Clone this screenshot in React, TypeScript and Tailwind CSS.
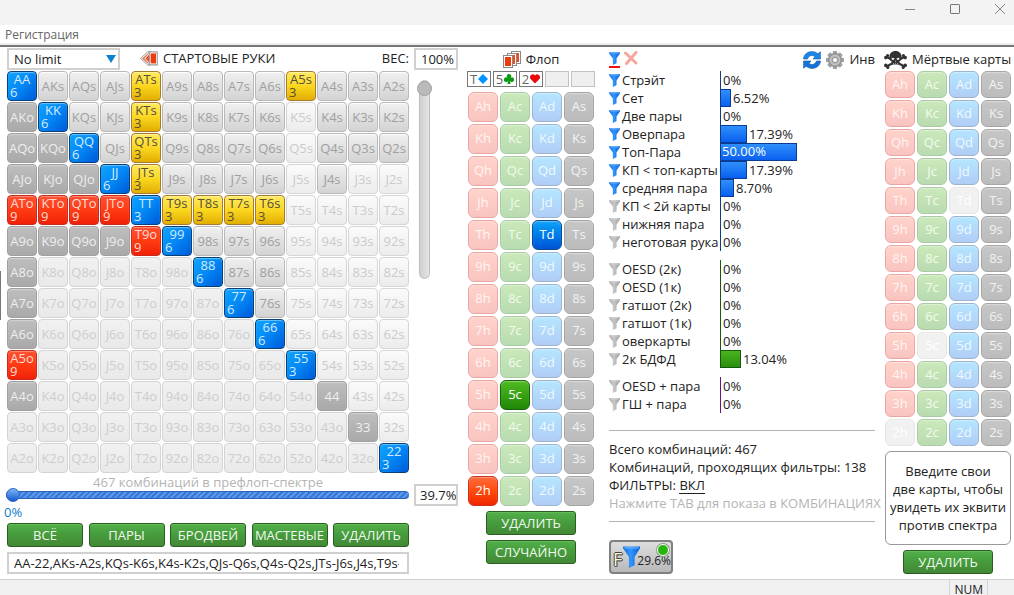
import React, { useState } from "react";

const RANKS = ["A", "K", "Q", "J", "T", "9", "8", "7", "6", "5", "4", "3", "2"];
const SUITS = ["h", "c", "d", "s"];

const SELECTED: Record<string, number> = {
  AA: 6, KK: 6, QQ: 6, JJ: 6, TT: 3, "99": 6, "88": 6, "77": 6, "66": 6, "55": 3, "22": 3,
  ATs: 3, KTs: 3, QTs: 3, JTs: 3, T9s: 3, T8s: 3, T7s: 3, T6s: 3, A5s: 3,
  ATo: 9, KTo: 9, QTo: 9, JTo: 9, T9o: 9, A5o: 9,
};

const IN_RANGE = new Set(
  (
    "AKs AQs AJs A9s A8s A7s A6s A4s A3s A2s KQs KJs K9s K8s K7s K6s K4s K3s K2s " +
    "QJs Q9s Q8s Q7s Q6s Q4s Q3s Q2s J9s J8s J7s J6s J4s 98s 97s 96s 87s 86s 76s " +
    "AKo AQo AJo A9o A8o A7o A6o A4o KQo KJo K9o QJo Q9o J9o 44 33"
  ).split(" ")
);

function handName(row: number, col: number) {
  if (row === col) return RANKS[row] + RANKS[col];
  return row < col ? RANKS[row] + RANKS[col] + "s" : RANKS[col] + RANKS[row] + "o";
}

function handStyle(name: string) {
  const kind = name.length === 2 ? "p" : name[2];
  if (name in SELECTED) {
    if (kind === "p") return "border-[#0a4078] bg-linear-to-br from-[#11a4ff] via-[#0487f5] to-[#0058d8] text-[#d5eaff] shadow-[inset_0_1px_1px_#69c4ff]";
    if (kind === "s") return "border-[#a87a30] bg-linear-to-b from-[#ffe95c] via-[#fbd71d] to-[#e2ae00] text-[#55503a] shadow-[inset_0_1px_1px_#fff3a0]";
    return "border-[#c92a1c] bg-linear-to-b from-[#ff5030] via-[#ff3a12] to-[#f02008] text-[#ffdcd2] shadow-[inset_0_1px_1px_#ff9078]";
  }
  if (IN_RANGE.has(name)) {
    if (kind === "s") return "border-[#b8b8b8] bg-linear-to-b from-[#f0f0f0] to-[#d3d3d3] text-[#a0a0a0] shadow-[inset_0_1px_1px_#ffffff]";
    return "border-[#a0a0a0] bg-linear-to-b from-[#bebebe] to-[#a9a9a9] text-[#eeeeee] shadow-[inset_0_1px_1px_#d2d2d2]";
  }
  if (kind === "s") return "border-[#d6d6d6] bg-linear-to-b from-[#fbfbfb] to-[#ececec] text-[#cbcbcb]";
  return "border-[#d4d4d4] bg-linear-to-b from-[#f1f1f1] to-[#e9e9e9] text-[#cdcdcd]";
}

const CARD_STYLE: Record<string, string> = {
  h: "border-[#eba6a4] bg-linear-to-b from-[#ffd3ca] to-[#f9c4c0] text-[#fff5f3]",
  c: "border-[#a9cba4] bg-linear-to-b from-[#cbe9ba] to-[#b9dbb0] text-[#f3fbef]",
  d: "border-[#9db4cf] bg-linear-to-b from-[#b4e6ff] to-[#b0cdf6] text-[#f0f9ff]",
  s: "border-[#a5a5a5] bg-linear-to-b from-[#c6c6c6] to-[#bcbcbc] text-[#f3f3f3]",
};

const CARD_ACTIVE: Record<string, string> = {
  h: "border-[#d3301e] bg-linear-to-b from-[#ff6a35] via-[#ff4a0c] to-[#f02400] text-white",
  c: "border-[#17600c] bg-linear-to-b from-[#4fbb20] to-[#1f8806] text-white",
  d: "border-[#0b4b90] bg-linear-to-b from-[#14a2fb] to-[#0052d6] text-white",
  s: "border-[#333333] bg-linear-to-b from-[#666666] to-[#333333] text-white",
};

function CardGrid({ label, active, disabled, compact }: { label: string; active: string[]; disabled: string[]; compact?: boolean }) {
  return (
    <div role="group" aria-label={label} className="grid grid-cols-[repeat(4,30px)] gap-0.5">
      {RANKS.map((rank) =>
        SUITS.map((suit) => {
          const card = rank + suit;
          const look = active.includes(card)
            ? CARD_ACTIVE[suit]
            : disabled.includes(card)
              ? "border-[#e6e6e6] bg-[#f1f1f1] text-white"
              : CARD_STYLE[suit];
          return (
            <button
              key={card}
              type="button"
              className={`flex items-center justify-center rounded-md border shadow-[inset_0_1px_1px_rgba(255,255,255,0.35)] ${compact ? "h-[27px]" : "h-[30px]"} ${look}`}
            >
              {card}
            </button>
          );
        })
      )}
    </div>
  );
}

function GreenButton({ children, wide }: { children: React.ReactNode; wide?: boolean }) {
  return (
    <button
      type="button"
      className={`flex h-6 items-center justify-center rounded-[3px] border border-[#2b5f22] bg-linear-to-b from-[#52b04a] via-[#469b3c] to-[#438836] pt-0.5 whitespace-nowrap text-[#f1faee] shadow-[inset_0_1px_0_#62bb58] ${wide ? "w-[90px]" : "w-[76px]"}`}
    >
      {children}
    </button>
  );
}

function Funnel({ on, className }: { on: boolean; className: string }) {
  const id = on ? "funnel-on" : "funnel-off";
  return (
    <svg viewBox="0 0 12 14" preserveAspectRatio="none" className={className} aria-hidden="true">
      <defs>
        <linearGradient id={id} x1="0" y1="0" x2="1" y2="0">
          <stop offset="0" stopColor={on ? "#1a6ce0" : "#a6a6a6"} />
          <stop offset="0.45" stopColor={on ? "#2f96ff" : "#c8c8c8"} />
          <stop offset="1" stopColor={on ? "#0b5cd2" : "#999999"} />
        </linearGradient>
      </defs>
      <path d="M0 0.3H12V1.4L8.2 7V12.2L4.2 14V7L0 1.4Z" fill={`url(#${id})`} />
      <path d="M1 1.2H11" stroke={on ? "#6ab4ff" : "#d4d4d4"} strokeWidth="0.8" />
    </svg>
  );
}

type Row = { name: string; pct: number; on?: boolean };

const GROUPS: { tone: "blue" | "green" | "purple"; rows: Row[] }[] = [
  {
    tone: "blue",
    rows: [
      { name: "Стрэйт", pct: 0, on: true },
      { name: "Сет", pct: 6.52, on: true },
      { name: "Две пары", pct: 0, on: true },
      { name: "Оверпара", pct: 17.39, on: true },
      { name: "Топ-Пара", pct: 50, on: true },
      { name: "КП < топ-карты", pct: 17.39, on: true },
      { name: "средняя пара", pct: 8.7, on: true },
      { name: "КП < 2й карты", pct: 0 },
      { name: "нижняя пара", pct: 0 },
      { name: "неготовая рука", pct: 0 },
    ],
  },
  {
    tone: "green",
    rows: [
      { name: "OESD (2к)", pct: 0 },
      { name: "OESD (1к)", pct: 0 },
      { name: "гатшот (2к)", pct: 0 },
      { name: "гатшот (1к)", pct: 0 },
      { name: "оверкарты", pct: 0 },
      { name: "2к БДФД", pct: 13.04 },
    ],
  },
  {
    tone: "purple",
    rows: [
      { name: "OESD + пара", pct: 0 },
      { name: "ГШ + пара", pct: 0 },
    ],
  },
];

const AXIS = { blue: "border-[#0c3c8c]", green: "border-[#155a10]", purple: "border-[#6a1480]" };
const BAR = {
  blue: "border-[#0b3c94] bg-linear-to-b from-[#2f8ffb] to-[#0a5ff0]",
  green: "border-[#145a0c] bg-linear-to-b from-[#4ab41e] to-[#2b8e10]",
  purple: "border-[#6a1480] bg-[#9030b0]",
};

function FilterRow({ row, tone }: { row: Row; tone: "blue" | "green" | "purple" }) {
  const text = row.pct === 0 ? "0%" : row.pct.toFixed(2) + "%";
  const inside = row.pct >= 40;
  return (
    <li className="flex h-[18px] items-stretch">
      <button type="button" aria-pressed={!!row.on} className="flex w-[111px] items-center gap-0.5 pt-px text-left whitespace-nowrap">
        <Funnel on={!!row.on} className="h-[13px] w-[11px] shrink-0" />
        {row.name}
      </button>
      <div className={`flex items-center border-l ${AXIS[tone]}`}>
        {row.pct > 0 && (
          <div className={`flex h-full items-center border border-l-0 text-white ${BAR[tone]}`} style={{ width: Math.round(row.pct * 1.52) }}>
            {inside && <span className="pl-px">{text}</span>}
          </div>
        )}
        {!inside && <span className="pt-px pl-0.5">{text}</span>}
      </div>
    </li>
  );
}

const FIELD = "h-[22px] border-2 border-[#d0d0d0] bg-white outline-none";

const SUIT_PATHS: Record<string, { color: string; d: string }> = {
  d: { color: "#0094ff", d: "M5 0L10 5L5 10L0 5Z" },
  c: { color: "#0b9a12", d: "M5 0A2.3 2.3 0 0 1 6.8 3.7A2.3 2.3 0 1 1 5.8 6.8L6.6 10H3.4L4.2 6.8A2.3 2.3 0 1 1 3.2 3.7A2.3 2.3 0 0 1 5 0Z" },
  h: { color: "#ea0a0a", d: "M5 9.6L0.6 5A2.7 2.7 0 0 1 5 1.6A2.7 2.7 0 0 1 9.4 5Z" },
};

function BoardSlot({ rank, suit }: { rank?: string; suit?: string }) {
  if (!rank || !suit) return <div className="h-4 w-6 border border-[#c2c2c2] bg-[#efefef]" />;
  return (
    <div className="flex h-4 w-6 items-center justify-center gap-px border border-[#777777] bg-white leading-none text-[#666666]">
      {rank}
      <svg viewBox="0 0 10 10" className="size-2.5" aria-hidden="true">
        <path d={SUIT_PATHS[suit].d} fill={SUIT_PATHS[suit].color} />
      </svg>
    </div>
  );
}

function TitleBar() {
  return (
    <header className="flex h-[25px] items-start justify-end gap-[35px] bg-[#f3f3f3] pt-1 pr-[9px]">
      <button type="button" aria-label="Свернуть">
        <svg viewBox="0 0 10 10" className="size-2.5"><path d="M0 5.5H10" stroke="#888" fill="none" /></svg>
      </button>
      <button type="button" aria-label="Развернуть">
        <svg viewBox="0 0 10 10" className="size-2.5"><rect x="0.5" y="0.5" width="9" height="9" rx="0.6" stroke="#777" fill="none" /></svg>
      </button>
      <button type="button" aria-label="Закрыть">
        <svg viewBox="0 0 10 10" className="size-2.5"><path d="M0 0L10 10M10 0L0 10" stroke="#888" fill="none" /></svg>
      </button>
    </header>
  );
}

function HandsIcon() {
  return (
    <svg viewBox="0 0 18 16" className="h-4 w-[18px]" aria-hidden="true">
      <path d="M0.6 7.4L7.6 0.9H10V14H7.6Z" fill="#fff" stroke="#9a9a9a" />
      <path d="M2.2 7.4L8 2.2V12.8Z" fill="#f5582e" />
      <path d="M4.2 7.4L10 1.2V13.8Z" fill="#fff" stroke="#aaa" strokeWidth="0.5" />
      <path d="M5.4 7.4L9.6 3.2V11.8Z" fill="#f0461e" />
      <rect x="9.2" y="0.9" width="8" height="13" fill="#fff" stroke="#888" />
      <rect x="10.6" y="2.4" width="5.4" height="10" fill="#f03a10" />
    </svg>
  );
}

function FlopIcon() {
  return (
    <svg viewBox="0 0 18 17" className="h-[17px] w-[18px]" aria-hidden="true">
      <rect x="8.5" y="0.5" width="9" height="12" fill="#fff" stroke="#8a8a8a" />
      <rect x="10" y="2" width="6" height="9" fill="#f04a18" />
      <rect x="4.5" y="2.5" width="9" height="12" fill="#fff" stroke="#8a8a8a" />
      <rect x="6" y="4" width="6" height="9" fill="#f04a18" />
      <rect x="0.5" y="4.5" width="9" height="12" fill="#fff" stroke="#8a8a8a" />
      <rect x="2" y="6" width="6" height="9" fill="#ee3a0c" />
    </svg>
  );
}

function RefreshIcon() {
  return (
    <svg viewBox="0 0 18 18" className="size-[18px]" aria-hidden="true">
      <path d="M0.5 8C0.8 3.6 4.4 0.6 8.8 0.6C11.2 0.6 13.2 1.4 14.8 2.8L17.4 0.8V8H10L12 5.8C9.8 3.6 5.6 4.2 4.6 8Z" fill="#1a86e6" stroke="#1559a8" strokeWidth="0.6" />
      <path d="M17.5 10C17.2 14.4 13.6 17.4 9.2 17.4C6.8 17.4 4.8 16.6 3.2 15.2L0.6 17.2V10H8L6 12.2C8.2 14.4 12.4 13.8 13.4 10Z" fill="#1672d6" stroke="#1559a8" strokeWidth="0.6" />
    </svg>
  );
}

function GearIcon() {
  return (
    <svg viewBox="0 0 18 18" className="size-[18px]" aria-hidden="true">
      <g fill="#a8a8a8" stroke="#777777" strokeWidth="0.6">
        {[0, 45, 90, 135, 180, 225, 270, 315].map((angle) => (
          <path key={angle} d="M6.9 4L7.4 0.4H10.6L11.1 4Z" transform={`rotate(${angle} 9 9)`} />
        ))}
        <circle cx="9" cy="9" r="6.4" />
      </g>
      <circle cx="9" cy="9" r="4.6" fill="#b4b4b4" stroke="#c4c4c4" strokeWidth="1.2" />
      <circle cx="9" cy="9" r="2.5" fill="#fff" stroke="#808080" strokeWidth="0.8" />
    </svg>
  );
}

function SkullIcon() {
  return (
    <svg viewBox="0 0 23 18" className="h-[18px] w-[23px] shrink-0" aria-hidden="true">
      <g stroke="#333333" strokeWidth="2.2" strokeLinecap="round">
        <path d="M2.8 6L20 15.2M20.2 6L3 15.2" />
      </g>
      <g fill="#333333">
        <circle cx="1.8" cy="6.6" r="1.8" /><circle cx="3.6" cy="4.6" r="1.6" />
        <circle cx="21.2" cy="6.6" r="1.8" /><circle cx="19.4" cy="4.6" r="1.6" />
        <circle cx="1.8" cy="14.4" r="1.8" /><circle cx="3.8" cy="16.4" r="1.6" />
        <circle cx="21.2" cy="14.4" r="1.8" /><circle cx="19.2" cy="16.4" r="1.6" />
        <path d="M11.5 0C7.8 0 5.4 2.6 5.4 6C5.4 8 6.2 9.6 7.6 10.4V13.6H15.4V10.4C16.8 9.6 17.6 8 17.6 6C17.6 2.6 15.2 0 11.5 0Z" />
      </g>
      <path d="M7.6 6.8L10.4 7.2L10 8.8H8ZM15.4 6.8L12.6 7.2L13 8.8H15Z" fill="#fff" />
      <path d="M11.5 9.4L12.1 10.6H10.9Z" fill="#fff" />
      <path d="M9.5 12V13.4M11.5 12V13.4M13.5 12V13.4" stroke="#ddd" strokeWidth="0.6" />
    </svg>
  );
}

function StartingHands() {
  const [range, setRange] = useState("AA-22,AKs-A2s,KQs-K6s,K4s-K2s,QJs-Q6s,Q4s-Q2s,JTs-J6s,J4s,T9s-T6s,98s-96s,87s-86s,76s");
  return (
    <section className="flex w-[402px] shrink-0 flex-col">
      <div className="flex h-[22px] items-center">
        <div className="grid w-[113px] items-center">
          <select aria-label="Тип игры" className={`${FIELD} col-start-1 row-start-1 w-full appearance-none pl-[5px]`}>
            <option>No limit</option>
          </select>
          <svg viewBox="0 0 10 8" className="pointer-events-none col-start-1 row-start-1 mr-1 h-2 w-2.5 justify-self-end" aria-hidden="true">
            <path d="M0 0H10L5 8Z" fill="#0a84d0" />
          </svg>
        </div>
        <h2 className="ml-5 flex items-center gap-[5px]">
          <HandsIcon />
          СТАРТОВЫЕ РУКИ
        </h2>
        <label htmlFor="weight" className="ml-auto">ВЕС:</label>
      </div>

      <div role="group" aria-label="Стартовые руки" className="mt-px grid grid-cols-[repeat(13,30px)] gap-px">
        {RANKS.map((_, row) =>
          RANKS.map((__, col) => {
            const name = handName(row, col);
            const count = SELECTED[name];
            return (
              <button
                key={name}
                type="button"
                className={`flex h-[30px] flex-col justify-center rounded-sm border leading-[13px] ${handStyle(name)}`}
              >
                <span className="flex justify-center self-stretch">{name}</span>
                {count !== undefined && <span className="self-start pl-0.5">{count}</span>}
              </button>
            );
          })
        )}
      </div>

      <p className="h-[15px] text-center leading-[18px] text-[#b4b4b4]">467 комбинаций в префлоп-спектре</p>
      <input
        type="range"
        aria-label="Размер спектра"
        defaultValue={0}
        className="-ml-px h-3.5 w-[403px] appearance-none bg-transparent [&::-webkit-slider-runnable-track]:h-2 [&::-webkit-slider-runnable-track]:rounded-sm [&::-webkit-slider-runnable-track]:border-y [&::-webkit-slider-runnable-track]:border-[#2a62b8] [&::-webkit-slider-runnable-track]:bg-[repeating-linear-gradient(135deg,#5c98e8_0px,#5c98e8_2px,#3878d8_2px,#3878d8_4px)] [&::-webkit-slider-thumb]:-mt-1 [&::-webkit-slider-thumb]:size-3.5 [&::-webkit-slider-thumb]:appearance-none [&::-webkit-slider-thumb]:rounded-full [&::-webkit-slider-thumb]:border [&::-webkit-slider-thumb]:border-[#2a66c8] [&::-webkit-slider-thumb]:bg-linear-to-b [&::-webkit-slider-thumb]:from-[#78b4f4] [&::-webkit-slider-thumb]:to-[#1a58d0]"
      />
      <p className="-ml-[3px] h-[21px] leading-5 text-[#0a7ec8]">0%</p>
      <div className="flex justify-between">
        <GreenButton>ВСЁ</GreenButton>
        <GreenButton>ПАРЫ</GreenButton>
        <GreenButton>БРОДВЕЙ</GreenButton>
        <GreenButton>МАСТЕВЫЕ</GreenButton>
        <GreenButton>УДАЛИТЬ</GreenButton>
      </div>
      <input
        type="text"
        aria-label="Спектр"
        value={range}
        onChange={(e) => setRange(e.target.value)}
        className={`${FIELD} mt-[5px] w-full pr-2 pl-[5px]`}
      />
    </section>
  );
}

function WeightColumn() {
  return (
    <div className="flex w-11 shrink-0 flex-col">
      <input id="weight" type="text" defaultValue="100%" className={`${FIELD} w-full pl-[5px]`} />
      <input
        type="range"
        aria-label="Вес"
        defaultValue={100}
        className="mt-2.5 ml-[3px] h-[199px] w-[15px] appearance-none bg-transparent [direction:rtl] [writing-mode:vertical-lr] [&::-webkit-slider-runnable-track]:w-[11px] [&::-webkit-slider-runnable-track]:rounded-md [&::-webkit-slider-runnable-track]:border [&::-webkit-slider-runnable-track]:border-[#bdbdbd] [&::-webkit-slider-runnable-track]:bg-linear-to-r [&::-webkit-slider-runnable-track]:from-[#cfcfcf] [&::-webkit-slider-runnable-track]:to-[#e6e6e6] [&::-webkit-slider-thumb]:-ml-[3px] [&::-webkit-slider-thumb]:size-[15px] [&::-webkit-slider-thumb]:appearance-none [&::-webkit-slider-thumb]:rounded-full [&::-webkit-slider-thumb]:border [&::-webkit-slider-thumb]:border-[#a0a0a0] [&::-webkit-slider-thumb]:bg-[#bababa]"
      />
      <input type="text" aria-label="Процент спектра" defaultValue="39.7%" className={`${FIELD} mt-auto mb-[69px] w-full pl-1`} />
    </div>
  );
}

function Flop() {
  return (
    <section className="flex w-32 shrink-0 flex-col items-center">
      <h2 className="flex h-[23px] items-center gap-[5px]">
        <FlopIcon />
        Флоп
      </h2>
      <div className="flex gap-0.5">
        <BoardSlot rank="T" suit="d" />
        <BoardSlot rank="5" suit="c" />
        <BoardSlot rank="2" suit="h" />
        <BoardSlot />
        <BoardSlot />
      </div>
      <div className="my-[5px]">
        <CardGrid label="Флоп" active={["Td", "5c", "2h"]} disabled={[]} />
      </div>
      <div className="flex flex-col gap-[5px]">
        <GreenButton wide>УДАЛИТЬ</GreenButton>
        <GreenButton wide>СЛУЧАЙНО</GreenButton>
      </div>
    </section>
  );
}

function Filters() {
  return (
    <section className="flex min-w-0 flex-1 flex-col">
      <div className="flex h-[23px] items-center">
        <button type="button" aria-label="Фильтры" className="border-b-2 border-[#f01010] pb-px">
          <Funnel on className="h-[13px] w-[11px]" />
        </button>
        <button type="button" aria-label="Сбросить фильтры" className="mb-1 ml-1">
          <svg viewBox="0 0 14 14" className="size-3.5">
            <path d="M1.5 2L12 12M12 1.5L2.5 12.5" stroke="#f8a59b" strokeWidth="3" strokeLinecap="round" />
          </svg>
        </button>
        <div className="ml-auto flex items-center gap-[5px]">
          <button type="button" aria-label="Обновить"><RefreshIcon /></button>
          <button type="button" aria-label="Настройки"><GearIcon /></button>
          <button type="button">Инв</button>
        </div>
      </div>

      <div className="flex flex-col gap-[9px]">
        {GROUPS.map((group) => (
          <ul key={group.tone}>
            {group.rows.map((row) => (
              <FilterRow key={row.name} row={row} tone={group.tone} />
            ))}
          </ul>
        ))}
      </div>

      <div className="mt-[17px] border-y border-[#b4b4b4] py-[9px] leading-[18px] whitespace-nowrap">
        <p>Всего комбинаций: 467</p>
        <p>Комбинаций, проходящих фильтры: 138</p>
        <p>
          ФИЛЬТРЫ: <button type="button" className="border-b border-[#222222] leading-[15px]">ВКЛ</button>
        </p>
        <p className="text-[#b4b4b4]">Нажмите TAB для показа в КОМБИНАЦИЯХ</p>
      </div>

      <button
        type="button"
        className="relative mt-[18px] flex h-[34px] w-16 items-end rounded-sm border-2 border-[#808080] bg-linear-to-b from-[#dedede] to-[#b9b9b9] pb-1 pl-0.5 text-xs leading-[15px]"
      >
        <span className="text-lg leading-[17px] text-[#fff3d0] [text-shadow:1px_0_#444444,-1px_0_#444444,0_1px_#444444,0_-1px_#444444,1px_1px_#666666]">F</span>
        <Funnel on className="ml-px h-[22px] w-[17px] shrink-0" />
        <span className="-ml-[3px]">29.6%</span>
        <span className="absolute top-0.5 right-0.5 size-3 rounded-full border border-white bg-[#28b40c] ring-1 ring-[#8a9a88]" />
      </button>
    </section>
  );
}

function DeadCards() {
  return (
    <section className="flex w-[126px] shrink-0 flex-col items-center">
      <h2 className="-ml-px flex h-[23px] items-center gap-[5px] self-start whitespace-nowrap">
        <SkullIcon />
        Мёртвые карты
      </h2>
      <CardGrid label="Мёртвые карты" active={[]} disabled={["Td", "5c", "2h"]} compact />
      <p className="mt-[5px] flex h-[94px] w-full items-center justify-center rounded-md border border-[#999999] text-center leading-[18px] whitespace-nowrap">
        Введите свои
        <br />
        две карты, чтобы
        <br />
        увидеть их эквити
        <br />
        против спектра
      </p>
      <div className="mt-[5px]">
        <GreenButton wide>УДАЛИТЬ</GreenButton>
      </div>
    </section>
  );
}

export default function App() {
  return (
    <div className="flex min-h-screen flex-col bg-white font-['Open_Sans','Noto_Sans',sans-serif] text-[13px] text-[#222222]">
      <TitleBar />
      <nav className="flex h-[22px] items-center border-b-2 border-[#777777] bg-linear-to-b from-white from-90% to-[#eeeeee] to-90% pl-[5px] text-xs text-[#666666]">
        <a href="#register">Регистрация</a>
      </nav>
      <main className="relative flex flex-1 items-stretch pt-px pr-[3px] pb-1 pl-[7px]">
        <span className="absolute top-[224px] left-0 h-[49px] w-px bg-[#777777]" />
        <StartingHands />
        <div className="ml-[5px] flex">
          <WeightColumn />
        </div>
        <div className="mr-3.5 ml-[9px]">
          <Flop />
        </div>
        <Filters />
        <div className="ml-2.5">
          <DeadCards />
        </div>
      </main>
      <footer className="flex h-4 items-start justify-end overflow-hidden border-t border-[#d0d0d0] bg-[#f0f0f0] pr-[26px] text-xs">
        <span className="border-x border-[#d4d4d4] px-1 pt-0.5">NUM</span>
      </footer>
    </div>
  );
}
